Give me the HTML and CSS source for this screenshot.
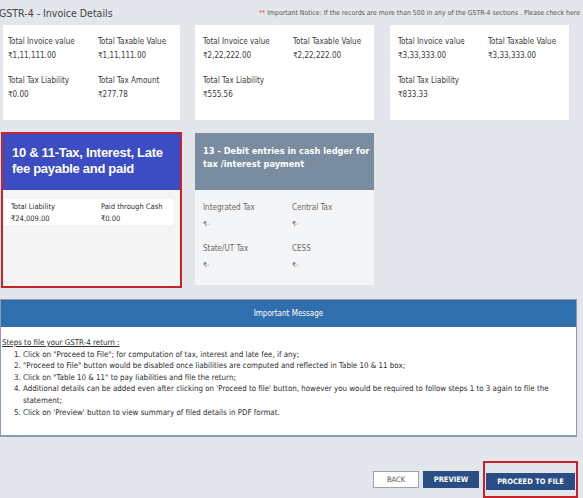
FILE: index.html
```html
<!DOCTYPE html>
<html lang="en">
<head>
<meta charset="utf-8">
<title>GSTR-4 - Invoice Details</title>
<link rel="stylesheet" href="styles.css">
</head>
<body>
<div class="page">
  <header class="topbar">
    <h1 class="page-title">GSTR-4 - Invoice Details</h1>
    <p class="notice"><span class="stars">**</span> Important Notice: If the records are more than 500 in any of the GSTR-4 sections . Please check here</p>
  </header>

  <section class="summary-row">
    <div class="sum-card first">
      <div class="field"><div class="lbl">Total Invoice value</div><div class="val">₹1,11,111.00</div></div>
      <div class="field"><div class="lbl">Total Taxable Value</div><div class="val">₹1,11,111.00</div></div>
      <div class="field"><div class="lbl">Total Tax Liability</div><div class="val">₹0.00</div></div>
      <div class="field"><div class="lbl">Total Tax Amount</div><div class="val">₹277.78</div></div>
    </div>
    <div class="sum-card">
      <div class="field"><div class="lbl">Total Invoice value</div><div class="val">₹2,22,222.00</div></div>
      <div class="field"><div class="lbl">Total Taxable Value</div><div class="val">₹2,22,222.00</div></div>
      <div class="field"><div class="lbl">Total Tax Liability</div><div class="val">₹555.56</div></div>
    </div>
    <div class="sum-card">
      <div class="field"><div class="lbl">Total Invoice value</div><div class="val">₹3,33,333.00</div></div>
      <div class="field"><div class="lbl">Total Taxable Value</div><div class="val">₹3,33,333.00</div></div>
      <div class="field"><div class="lbl">Total Tax Liability</div><div class="val">₹833.33</div></div>
    </div>
  </section>

  <section class="tile-row">
    <div class="tile tile-pay">
      <div class="tile-head pay-head">10 &amp; 11-Tax, Interest, Late fee payable and paid</div>
      <div class="tile-body">
        <div class="pay-strip">
          <div class="pfield"><div class="plbl">Total Liability</div><div class="pval">₹24,009.00</div></div>
          <div class="pfield"><div class="plbl">Paid through Cash</div><div class="pval">₹0.00</div></div>
        </div>
      </div>
    </div>
    <div class="tile tile-debit">
      <div class="tile-head debit-head">13 - Debit entries in cash ledger for tax /interest payment</div>
      <div class="tile-body debit-body">
        <div class="dfield"><div class="dlbl">Integrated Tax</div><div class="dval">₹-</div></div>
        <div class="dfield"><div class="dlbl">Central Tax</div><div class="dval">₹-</div></div>
        <div class="dfield"><div class="dlbl">State/UT Tax</div><div class="dval">₹-</div></div>
        <div class="dfield"><div class="dlbl">CESS</div><div class="dval">₹-</div></div>
      </div>
    </div>
  </section>

  <section class="msg-box">
    <div class="msg-head">Important Message</div>
    <div class="msg-body">
      <p class="steps-title">Steps to file your GSTR-4 return :</p>
      <ol class="steps">
        <li>Click on "Proceed to File"; for computation of tax, interest and late fee, if any;</li>
        <li>"Proceed to File" button would be disabled once liabilities are computed and reflected in Table 10 &amp; 11 box;</li>
        <li>Click on "Table 10 &amp; 11" to pay liabilities and file the return;</li>
        <li>Additional details can be added even after clicking on 'Proceed to file' button, however you would be required to follow steps 1 to 3 again to file the statement;</li>
        <li>Click on 'Preview' button to view summary of filed details in PDF format.</li>
      </ol>
    </div>
  </section>

  <div class="actions">
    <button class="btn btn-back">BACK</button>
    <button class="btn btn-primary">PREVIEW</button>
    <div class="highlight"><button class="btn btn-primary btn-proceed">PROCEED TO FILE</button></div>
  </div>
</div>
</body>
</html>
```

FILE: styles.css
```css
* { box-sizing: border-box; }

html, body {
  margin: 0;
  padding: 0;
  background: #e3e7eb;
}

body {
  font-family: "DejaVu Sans Condensed", "DejaVu Sans", sans-serif;
  color: #333;
  width: 583px;
  height: 498px;
  overflow: hidden;
}

.page {
  width: 583px;
}

.topbar {
  display: flex;
  align-items: center;
  height: 25px;
}

.page-title {
  flex: 0 0 260px;
  margin: 0 0 0 -1px;
  font-size: 10.5px;
  font-weight: normal;
  color: #444;
  white-space: nowrap;
}

.notice {
  flex: 1;
  min-width: 0;
  margin: 0;
  font-size: 6.9px;
  color: #555;
  white-space: nowrap;
  overflow: hidden;
}

.stars { color: #e0312f; }

.summary-row {
  display: flex;
  gap: 15px;
  padding-left: 3px;
}

.sum-card {
  width: 179px;
  height: 95px;
  background: #fff;
  padding: 10px 0 0 8px;
  display: grid;
  grid-template-columns: 90px 1fr;
  grid-auto-rows: min-content;
  row-gap: 11px;
}

.sum-card.first {
  width: 177px;
  padding-left: 5px;
}

.sum-card + .sum-card + .sum-card { margin-left: 1px; }

.lbl, .val {
  font-size: 8px;
  line-height: 14px;
  white-space: nowrap;
  color: #3a3a3a;
}

.tile-row {
  display: flex;
  gap: 13px;
  margin-top: 12px;
  padding-left: 1px;
}

.tile {
  display: flex;
  flex-direction: column;
}

.tile-pay {
  width: 181px;
  height: 156px;
  border: 2px solid #c8232c;
  background: #f4f4f5;
}

.tile-debit {
  width: 179px;
  height: 152px;
  margin-top: 1px;
  background: #f4f5f6;
}

.tile-head {
  color: #fff;
  font-weight: bold;
  height: 57px;
  flex: 0 0 auto;
}

.pay-head {
  background: #3c4cc2;
  font-family: "Liberation Sans", Arial, sans-serif;
  font-size: 13px;
  letter-spacing: -0.3px;
  line-height: 16px;
  padding: 11px 4px 0 9px;
  height: 56px;
}

.debit-head {
  background: #7a8ca0;
  font-size: 9.2px;
  line-height: 13px;
  padding: 11px 0 0 8px;
}

.tile-body { flex: 1; }

.pay-strip {
  margin: 9px 7px 0 1px;
  background: #fff;
  height: 26px;
  display: grid;
  grid-template-columns: 90px 1fr;
  padding: 2px 0 0 7px;
}

.plbl, .pval {
  font-size: 7.5px;
  line-height: 12px;
  color: #2e2e2e;
  white-space: nowrap;
}

.debit-body {
  display: grid;
  grid-template-columns: 89px 1fr;
  grid-auto-rows: min-content;
  row-gap: 9px;
  padding: 10px 0 0 8px;
}

.dlbl, .dval {
  font-size: 8px;
  line-height: 16px;
  color: #6a6a6a;
  white-space: nowrap;
}

.dval { font-size: 7px; }

.msg-box {
  margin-top: 11px;
  width: 577px;
  height: 138px;
  background: #fff;
  border: 1px solid #8a9db2;
  border-bottom-width: 2px;
}

.msg-head {
  background: #2f6fae;
  color: #fff;
  height: 27px;
  font-size: 8px;
  line-height: 27px;
  text-align: center;
}

.msg-body {
  padding: 10px 14px 0 1px;
  font-size: 7.9px;
  line-height: 11.6px;
  color: #2e2e2e;
}

.steps-title {
  margin: 0;
  text-decoration: underline;
}

.steps {
  margin: 0;
  padding-left: 21px;
}

.actions {
  display: flex;
  align-items: center;
  justify-content: flex-end;
  gap: 4px;
  padding-right: 5px;
  margin-top: 24px;
}

.btn {
  height: 17px;
  font-family: "DejaVu Sans Condensed", "DejaVu Sans", sans-serif;
  font-size: 7.5px;
  padding: 0;
  border: none;
  color: #fff;
  cursor: pointer;
}

.btn-back {
  width: 46px;
  background: #fff;
  border: 1px solid #9aa3ad;
  color: #555;
}

.btn-primary {
  width: 56px;
  background: #2a4d86;
  font-weight: bold;
}

.highlight {
  border: 2px solid #c8232c;
  padding: 6px 1px;
}

.btn-proceed {
  width: 89px;
}
```
